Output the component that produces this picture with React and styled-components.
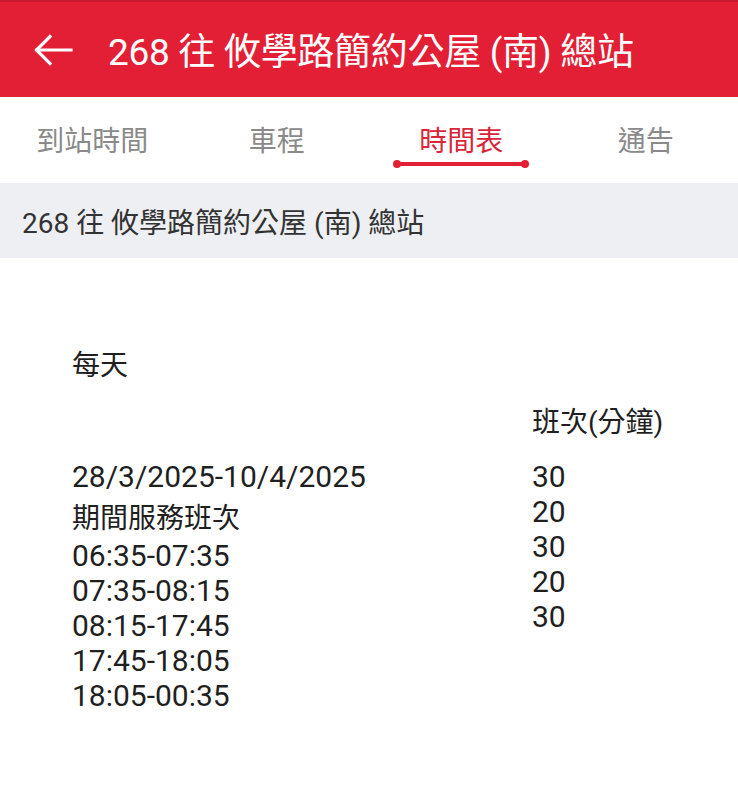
import styled, { createGlobalStyle } from 'styled-components';

const GlobalStyle = createGlobalStyle`
  body {
    margin: 0;
    background: #ffffff;
    font-family: Roboto, "Noto Sans CJK TC", sans-serif;
  }
`;

const Page = styled.div`
  width: 738px;
  min-height: 800px;
  display: flex;
  flex-direction: column;
  background: #ffffff;
`;

const AppBar = styled.header`
  height: 97px;
  box-sizing: border-box;
  border-top: 2px solid #c81a2c;
  background-color: #e31f35;
  display: flex;
  flex-direction: row;
  align-items: center;
  padding: 0 0 0 33px;
  gap: 34px;
`;

const BackButton = styled.div`
  width: 41px;
  height: 34px;
  display: flex;
  align-items: center;
  justify-content: center;
`;

const Title = styled.h1`
  margin: 0 0 2px 0;
  font-size: 37px;
  font-weight: 400;
  color: #ffffff;
  white-space: nowrap;
  letter-spacing: -0.3px;
`;

const Tabs = styled.nav`
  height: 86px;
  display: grid;
  grid-template-columns: repeat(4, 1fr);
  background: #ffffff;
`;

const Tab = styled.div`
  display: flex;
  flex-direction: column;
  align-items: center;
  padding-top: 27px;
  font-size: 28px;
  line-height: 36px;
  color: ${(p) => (p.$active ? '#d7263a' : '#8a8a8a')};
`;

const Indicator = styled.div`
  position: relative;
  margin-top: 2px;
  width: 132px;
  height: 4px;
  border-radius: 2px;
  background: #e31f35;

  &::before,
  &::after {
    content: '';
    position: absolute;
    top: -2px;
    width: 8px;
    height: 8px;
    border-radius: 50%;
    background: #e31f35;
  }
  &::before {
    left: -2px;
  }
  &::after {
    right: -2px;
  }
`;

const RouteBand = styled.div`
  height: 75px;
  display: flex;
  align-items: center;
  padding-left: 22px;
  background: #eeeff3;
  font-size: 28px;
  color: #333333;
  white-space: nowrap;
`;

const Content = styled.main`
  padding: 90px 0 0 72px;
  color: #1f1f1f;
  font-size: 28px;
  line-height: 35px;
`;

const DayLabel = styled.div`
  margin-bottom: 22px;
`;

const Table = styled.div`
  display: grid;
  grid-template-columns: 460px auto;
  row-gap: 19px;
`;

const Column = styled.div`
  display: flex;
  flex-direction: column;
`;

const Line = styled.div`
  white-space: nowrap;
  font-size: ${(p) => (p.$digits ? '30px' : '28px')};
  padding-top: ${(p) => (p.$spaced ? '6px' : '0')};
  line-height: ${(p) => (p.$spaced ? '38px' : '35px')};
`;

const periods = ['06:35-07:35', '07:35-08:15', '08:15-17:45', '17:45-18:05', '18:05-00:35'];
const headways = ['30', '20', '30', '20', '30'];

const BackArrow = () => (
  <svg width="41" height="34" viewBox="0 0 41 34" fill="none" stroke="#ffffff" strokeWidth="3.2" strokeLinecap="square">
    <path d="M4 17 H38" />
    <path d="M17 3.5 L3.5 17 L17 30.5" strokeLinejoin="miter" />
  </svg>
);

export default function App() {
  const route = '268 往 攸學路簡約公屋 (南) 總站';
  return (
    <Page>
      <GlobalStyle />
      <AppBar>
        <BackButton>
          <BackArrow />
        </BackButton>
        <Title>{route}</Title>
      </AppBar>
      <Tabs>
        <Tab>到站時間</Tab>
        <Tab>車程</Tab>
        <Tab $active>
          時間表
          <Indicator />
        </Tab>
        <Tab>通告</Tab>
      </Tabs>
      <RouteBand>{route}</RouteBand>
      <Content>
        <DayLabel>每天</DayLabel>
        <Table>
          <div />
          <Line>班次(分鐘)</Line>
          <Column>
            <Line $digits>28/3/2025-10/4/2025</Line>
            <Line $spaced>期間服務班次</Line>
            {periods.map((p) => (
              <Line key={p} $digits>
                {p}
              </Line>
            ))}
          </Column>
          <Column>
            {headways.map((h, i) => (
              <Line key={i} $digits>
                {h}
              </Line>
            ))}
          </Column>
        </Table>
      </Content>
    </Page>
  );
}
